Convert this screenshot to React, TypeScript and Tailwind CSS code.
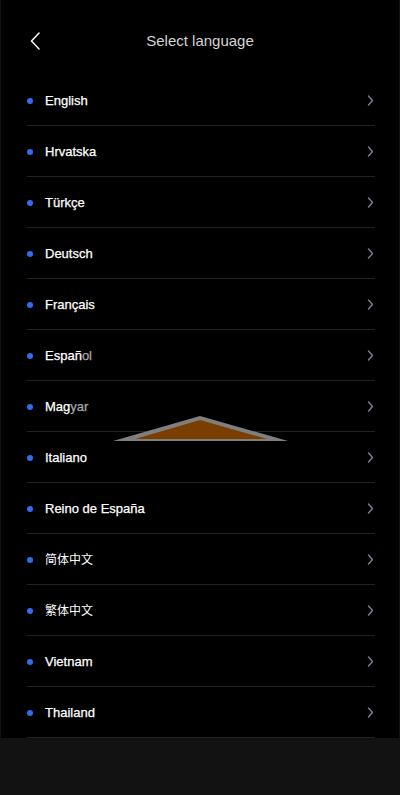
const languages: { name: string; dim?: string; cjk?: boolean }[] = [
  { name: 'English' },
  { name: 'Hrvatska' },
  { name: 'Türkçe' },
  { name: 'Deutsch' },
  { name: 'Français' },
  { name: 'Españ', dim: 'ol' },
  { name: 'Mag', dim: 'yar' },
  { name: 'Italiano' },
  { name: 'Reino de España' },
  { name: '简体中文', cjk: true },
  { name: '繁体中文', cjk: true },
  { name: 'Vietnam' },
  { name: 'Thailand' },
];

const BackIcon = () => (
  <svg width="10" height="18" viewBox="0 0 10 18" fill="none">
    <path d="M9 1L1.5 9L9 17" stroke="#ffffff" strokeWidth="1.5" strokeLinecap="round" strokeLinejoin="round" />
  </svg>
);

const ChevronRight = () => (
  <svg width="7" height="11" viewBox="0 0 7 11" fill="none">
    <path d="M1.5 1L5.5 5.5L1.5 10" stroke="#7a8196" strokeWidth="1.4" strokeLinecap="round" strokeLinejoin="round" />
  </svg>
);

export default function App() {
  return (
    <div
      className="relative h-[795px] w-full bg-[#121212] px-px"
      style={{ fontFamily: '"Liberation Sans", "Noto Sans CJK SC", sans-serif' }}
    >
      <div className="bg-black">
        <div className="relative h-[75px] pt-[29px]">
          <div className="relative flex h-6 items-center justify-center">
            <button className="absolute left-[29px] top-[3px]">
              <BackIcon />
            </button>
            <h1 className="text-[15px] text-[#d4d4d4]">Select language</h1>
          </div>
        </div>

        <ul className="ml-[26px] mr-[24px]">
          {languages.map((lang) => (
            <li key={lang.name} className="flex h-[51px] items-center border-b border-[#222222] pt-px">
              <span className="h-1.5 w-1.5 rounded-full bg-[#2f6cf2]" />
              {lang.cjk ? (
                <span className="ml-3 flex-1 text-[12px] font-normal text-white">{lang.name}</span>
              ) : (
                <span className="ml-3 flex-1 text-[13px] font-medium text-white [-webkit-text-stroke:0.25px_white]">
                  {lang.name}
                  {lang.dim && <span className="text-[#a8a8a8] [-webkit-text-stroke:0.25px_#a8a8a8]">{lang.dim}</span>}
                </span>
              )}
              <span className="mr-px">
                <ChevronRight />
              </span>
            </li>
          ))}
        </ul>
      </div>

      <svg className="absolute left-[113px] top-[415px]" width="176" height="27" viewBox="0 0 176 27">
        <polygon points="0,26 87,1 175,26" fill="#7f7f7f" />
        <polygon points="22,24 87,5 154,24" fill="#7a3f00" />
      </svg>
    </div>
  );
}
